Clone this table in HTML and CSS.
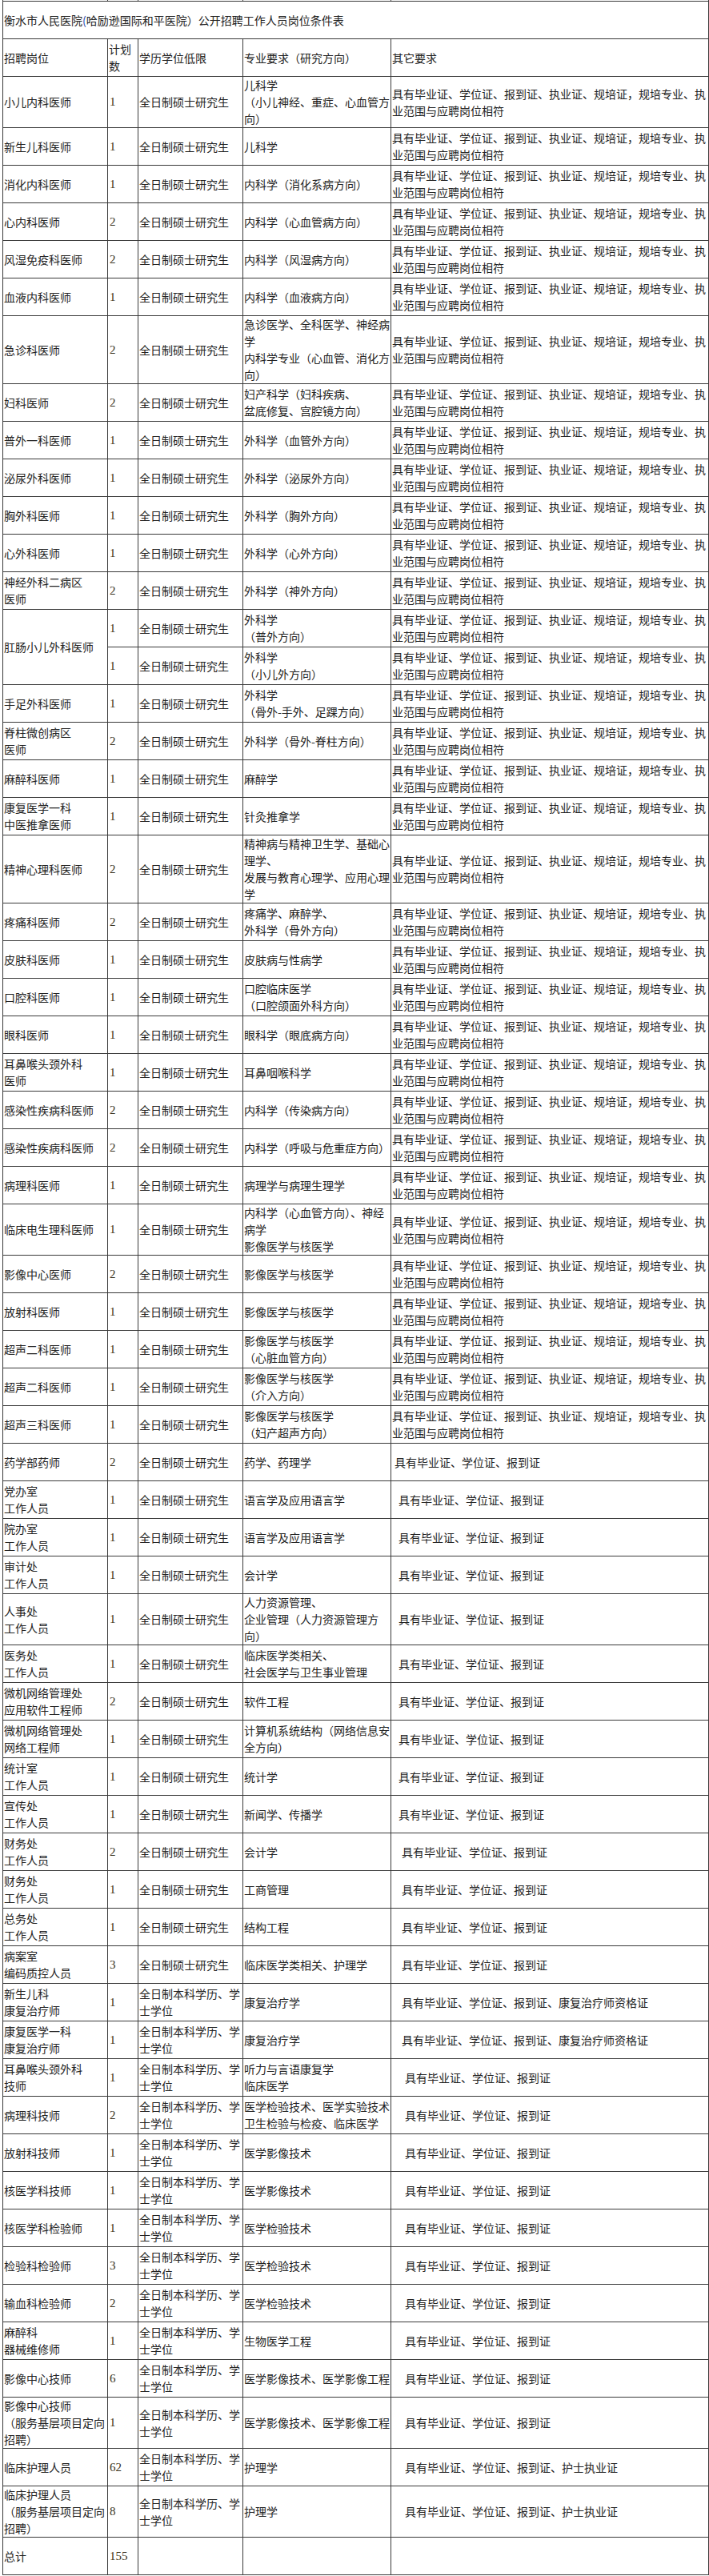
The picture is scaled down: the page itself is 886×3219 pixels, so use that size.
FILE: index.html
```html
<!DOCTYPE html>
<html lang="zh-CN">
<head>
<meta charset="utf-8">
<title>衡水市人民医院公开招聘工作人员岗位条件表</title>
<link rel="stylesheet" href="styles.css">
</head>
<body>
<table class="jobs">
<colgroup>
<col class="c1"><col class="c2"><col class="c3"><col class="c4"><col class="c5">
</colgroup>
<tbody>
<tr class="stub"><td></td><td></td><td></td><td></td><td></td></tr>
<tr><td colspan="5" class="title">衡水市人民医院<span class="paren">(</span>哈励逊国际和平医院）公开招聘工作人员岗位条件表</td></tr>
<tr><td>招聘岗位</td><td>计划数</td><td class="edu">学历学位低限</td><td>专业要求（研究方向）</td><td>其它要求</td></tr>

<tr><td>小儿内科医师</td><td class="num">1</td><td class="edu">全日制硕士研究生</td><td>儿科学<br>（小儿神经、重症、心血管方向）</td><td>具有毕业证、学位证、报到证、执业证、规培证，规培专业、执业范围与应聘岗位相符</td></tr>
<tr><td>新生儿科医师</td><td class="num">1</td><td class="edu">全日制硕士研究生</td><td>儿科学</td><td>具有毕业证、学位证、报到证、执业证、规培证，规培专业、执业范围与应聘岗位相符</td></tr>
<tr><td>消化内科医师</td><td class="num">1</td><td class="edu">全日制硕士研究生</td><td>内科学（消化系病方向）</td><td>具有毕业证、学位证、报到证、执业证、规培证，规培专业、执业范围与应聘岗位相符</td></tr>
<tr><td>心内科医师</td><td class="num">2</td><td class="edu">全日制硕士研究生</td><td>内科学（心血管病方向）</td><td>具有毕业证、学位证、报到证、执业证、规培证，规培专业、执业范围与应聘岗位相符</td></tr>
<tr><td>风湿免疫科医师</td><td class="num">2</td><td class="edu">全日制硕士研究生</td><td>内科学（风湿病方向）</td><td>具有毕业证、学位证、报到证、执业证、规培证，规培专业、执业范围与应聘岗位相符</td></tr>
<tr><td>血液内科医师</td><td class="num">1</td><td class="edu">全日制硕士研究生</td><td>内科学（血液病方向）</td><td>具有毕业证、学位证、报到证、执业证、规培证，规培专业、执业范围与应聘岗位相符</td></tr>
<tr><td>急诊科医师</td><td class="num">2</td><td class="edu">全日制硕士研究生</td><td>急诊医学、全科医学、神经病学<br>内科学专业（心血管、消化方向）</td><td>具有毕业证、学位证、报到证、执业证、规培证，规培专业、执业范围与应聘岗位相符</td></tr>
<tr><td>妇科医师</td><td class="num">2</td><td class="edu">全日制硕士研究生</td><td>妇产科学（妇科疾病、<br>盆底修复、宫腔镜方向）</td><td>具有毕业证、学位证、报到证、执业证、规培证，规培专业、执业范围与应聘岗位相符</td></tr>
<tr><td>普外一科医师</td><td class="num">1</td><td class="edu">全日制硕士研究生</td><td>外科学（血管外方向）</td><td>具有毕业证、学位证、报到证、执业证、规培证，规培专业、执业范围与应聘岗位相符</td></tr>
<tr><td>泌尿外科医师</td><td class="num">1</td><td class="edu">全日制硕士研究生</td><td>外科学（泌尿外方向）</td><td>具有毕业证、学位证、报到证、执业证、规培证，规培专业、执业范围与应聘岗位相符</td></tr>
<tr><td>胸外科医师</td><td class="num">1</td><td class="edu">全日制硕士研究生</td><td>外科学（胸外方向）</td><td>具有毕业证、学位证、报到证、执业证、规培证，规培专业、执业范围与应聘岗位相符</td></tr>
<tr><td>心外科医师</td><td class="num">1</td><td class="edu">全日制硕士研究生</td><td>外科学（心外方向）</td><td>具有毕业证、学位证、报到证、执业证、规培证，规培专业、执业范围与应聘岗位相符</td></tr>
<tr><td>神经外科二病区<br>医师</td><td class="num">2</td><td class="edu">全日制硕士研究生</td><td>外科学（神外方向）</td><td>具有毕业证、学位证、报到证、执业证、规培证，规培专业、执业范围与应聘岗位相符</td></tr>
<tr><td rowspan="2">肛肠小儿外科医师</td><td class="num">1</td><td class="edu">全日制硕士研究生</td><td>外科学<br>（普外方向）</td><td>具有毕业证、学位证、报到证、执业证、规培证，规培专业、执业范围与应聘岗位相符</td></tr>
<tr><td class="num">1</td><td class="edu">全日制硕士研究生</td><td>外科学<br>（小儿外方向）</td><td>具有毕业证、学位证、报到证、执业证、规培证，规培专业、执业范围与应聘岗位相符</td></tr>
<tr><td>手足外科医师</td><td class="num">1</td><td class="edu">全日制硕士研究生</td><td>外科学<br>（骨外-手外、足踝方向）</td><td>具有毕业证、学位证、报到证、执业证、规培证，规培专业、执业范围与应聘岗位相符</td></tr>
<tr><td>脊柱微创病区<br>医师</td><td class="num">2</td><td class="edu">全日制硕士研究生</td><td>外科学（骨外-脊柱方向）</td><td>具有毕业证、学位证、报到证、执业证、规培证，规培专业、执业范围与应聘岗位相符</td></tr>
<tr><td>麻醉科医师</td><td class="num">1</td><td class="edu">全日制硕士研究生</td><td>麻醉学</td><td>具有毕业证、学位证、报到证、执业证、规培证，规培专业、执业范围与应聘岗位相符</td></tr>
<tr><td>康复医学一科<br>中医推拿医师</td><td class="num">1</td><td class="edu">全日制硕士研究生</td><td>针灸推拿学</td><td>具有毕业证、学位证、报到证、执业证、规培证，规培专业、执业范围与应聘岗位相符</td></tr>
<tr><td>精神心理科医师</td><td class="num">2</td><td class="edu">全日制硕士研究生</td><td>精神病与精神卫生学、基础心理学、<br>发展与教育心理学、应用心理学</td><td>具有毕业证、学位证、报到证、执业证、规培证，规培专业、执业范围与应聘岗位相符</td></tr>
<tr><td>疼痛科医师</td><td class="num">2</td><td class="edu">全日制硕士研究生</td><td>疼痛学、麻醉学、<br>外科学（骨外方向）</td><td>具有毕业证、学位证、报到证、执业证、规培证，规培专业、执业范围与应聘岗位相符</td></tr>
<tr><td>皮肤科医师</td><td class="num">1</td><td class="edu">全日制硕士研究生</td><td>皮肤病与性病学</td><td>具有毕业证、学位证、报到证、执业证、规培证，规培专业、执业范围与应聘岗位相符</td></tr>
<tr><td>口腔科医师</td><td class="num">1</td><td class="edu">全日制硕士研究生</td><td>口腔临床医学<br>（口腔颌面外科方向）</td><td>具有毕业证、学位证、报到证、执业证、规培证，规培专业、执业范围与应聘岗位相符</td></tr>
<tr><td>眼科医师</td><td class="num">1</td><td class="edu">全日制硕士研究生</td><td>眼科学（眼底病方向）</td><td>具有毕业证、学位证、报到证、执业证、规培证，规培专业、执业范围与应聘岗位相符</td></tr>
<tr><td>耳鼻喉头颈外科<br>医师</td><td class="num">1</td><td class="edu">全日制硕士研究生</td><td>耳鼻咽喉科学</td><td>具有毕业证、学位证、报到证、执业证、规培证，规培专业、执业范围与应聘岗位相符</td></tr>
<tr><td>感染性疾病科医师</td><td class="num">2</td><td class="edu">全日制硕士研究生</td><td>内科学（传染病方向）</td><td>具有毕业证、学位证、报到证、执业证、规培证，规培专业、执业范围与应聘岗位相符</td></tr>
<tr><td>感染性疾病科医师</td><td class="num">2</td><td class="edu">全日制硕士研究生</td><td>内科学（呼吸与危重症方向）</td><td>具有毕业证、学位证、报到证、执业证、规培证，规培专业、执业范围与应聘岗位相符</td></tr>
<tr><td>病理科医师</td><td class="num">1</td><td class="edu">全日制硕士研究生</td><td>病理学与病理生理学</td><td>具有毕业证、学位证、报到证、执业证、规培证，规培专业、执业范围与应聘岗位相符</td></tr>
<tr><td>临床电生理科医师</td><td class="num">1</td><td class="edu">全日制硕士研究生</td><td>内科学（心血管方向）、神经病学<br>影像医学与核医学</td><td>具有毕业证、学位证、报到证、执业证、规培证，规培专业、执业范围与应聘岗位相符</td></tr>
<tr><td>影像中心医师</td><td class="num">2</td><td class="edu">全日制硕士研究生</td><td>影像医学与核医学</td><td>具有毕业证、学位证、报到证、执业证、规培证，规培专业、执业范围与应聘岗位相符</td></tr>
<tr><td>放射科医师</td><td class="num">1</td><td class="edu">全日制硕士研究生</td><td>影像医学与核医学</td><td>具有毕业证、学位证、报到证、执业证、规培证，规培专业、执业范围与应聘岗位相符</td></tr>
<tr><td>超声二科医师</td><td class="num">1</td><td class="edu">全日制硕士研究生</td><td>影像医学与核医学<br>（心脏血管方向）</td><td>具有毕业证、学位证、报到证、执业证、规培证，规培专业、执业范围与应聘岗位相符</td></tr>
<tr><td>超声二科医师</td><td class="num">1</td><td class="edu">全日制硕士研究生</td><td>影像医学与核医学<br>（介入方向）</td><td>具有毕业证、学位证、报到证、执业证、规培证，规培专业、执业范围与应聘岗位相符</td></tr>
<tr><td>超声三科医师</td><td class="num">1</td><td class="edu">全日制硕士研究生</td><td>影像医学与核医学<br>（妇产超声方向）</td><td>具有毕业证、学位证、报到证、执业证、规培证，规培专业、执业范围与应聘岗位相符</td></tr>
<tr><td>药学部药师</td><td class="num">2</td><td class="edu">全日制硕士研究生</td><td>药学、药理学</td><td class="in0">具有毕业证、学位证、报到证</td></tr>
<tr><td>党办室<br>工作人员</td><td class="num">1</td><td class="edu">全日制硕士研究生</td><td>语言学及应用语言学</td><td class="in1">具有毕业证、学位证、报到证</td></tr>
<tr><td>院办室<br>工作人员</td><td class="num">1</td><td class="edu">全日制硕士研究生</td><td>语言学及应用语言学</td><td class="in1">具有毕业证、学位证、报到证</td></tr>
<tr><td>审计处<br>工作人员</td><td class="num">1</td><td class="edu">全日制硕士研究生</td><td>会计学</td><td class="in1">具有毕业证、学位证、报到证</td></tr>
<tr><td>人事处<br>工作人员</td><td class="num">1</td><td class="edu">全日制硕士研究生</td><td>人力资源管理、<br>企业管理（人力资源管理方向）</td><td class="in1">具有毕业证、学位证、报到证</td></tr>
<tr><td>医务处<br>工作人员</td><td class="num">1</td><td class="edu">全日制硕士研究生</td><td>临床医学类相关、<br>社会医学与卫生事业管理</td><td class="in1">具有毕业证、学位证、报到证</td></tr>
<tr><td>微机网络管理处<br>应用软件工程师</td><td class="num">2</td><td class="edu">全日制硕士研究生</td><td>软件工程</td><td class="in1">具有毕业证、学位证、报到证</td></tr>
<tr><td>微机网络管理处<br>网络工程师</td><td class="num">1</td><td class="edu">全日制硕士研究生</td><td>计算机系统结构（网络信息安全方向）</td><td class="in1">具有毕业证、学位证、报到证</td></tr>
<tr><td>统计室<br>工作人员</td><td class="num">1</td><td class="edu">全日制硕士研究生</td><td>统计学</td><td class="in1">具有毕业证、学位证、报到证</td></tr>
<tr><td>宣传处<br>工作人员</td><td class="num">1</td><td class="edu">全日制硕士研究生</td><td>新闻学、传播学</td><td class="in1">具有毕业证、学位证、报到证</td></tr>
<tr><td>财务处<br>工作人员</td><td class="num">2</td><td class="edu">全日制硕士研究生</td><td>会计学</td><td class="in2">具有毕业证、学位证、报到证</td></tr>
<tr><td>财务处<br>工作人员</td><td class="num">1</td><td class="edu">全日制硕士研究生</td><td>工商管理</td><td class="in2">具有毕业证、学位证、报到证</td></tr>
<tr><td>总务处<br>工作人员</td><td class="num">1</td><td class="edu">全日制硕士研究生</td><td>结构工程</td><td class="in2">具有毕业证、学位证、报到证</td></tr>
<tr><td>病案室<br>编码质控人员</td><td class="num">3</td><td class="edu">全日制硕士研究生</td><td>临床医学类相关、护理学</td><td class="in2">具有毕业证、学位证、报到证</td></tr>
<tr><td>新生儿科<br>康复治疗师</td><td class="num">1</td><td class="edu">全日制本科学历、学士学位</td><td>康复治疗学</td><td class="in2">具有毕业证、学位证、报到证、康复治疗师资格证</td></tr>
<tr><td>康复医学一科<br>康复治疗师</td><td class="num">1</td><td class="edu">全日制本科学历、学士学位</td><td>康复治疗学</td><td class="in2">具有毕业证、学位证、报到证、康复治疗师资格证</td></tr>
<tr><td>耳鼻喉头颈外科<br>技师</td><td class="num">1</td><td class="edu">全日制本科学历、学士学位</td><td>听力与言语康复学<br>临床医学</td><td class="in3">具有毕业证、学位证、报到证</td></tr>
<tr><td>病理科技师</td><td class="num">2</td><td class="edu">全日制本科学历、学士学位</td><td>医学检验技术、医学实验技术<br>卫生检验与检疫、临床医学</td><td class="in3">具有毕业证、学位证、报到证</td></tr>
<tr><td>放射科技师</td><td class="num">1</td><td class="edu">全日制本科学历、学士学位</td><td>医学影像技术</td><td class="in3">具有毕业证、学位证、报到证</td></tr>
<tr><td>核医学科技师</td><td class="num">1</td><td class="edu">全日制本科学历、学士学位</td><td>医学影像技术</td><td class="in3">具有毕业证、学位证、报到证</td></tr>
<tr><td>核医学科检验师</td><td class="num">1</td><td class="edu">全日制本科学历、学士学位</td><td>医学检验技术</td><td class="in3">具有毕业证、学位证、报到证</td></tr>
<tr><td>检验科检验师</td><td class="num">3</td><td class="edu">全日制本科学历、学士学位</td><td>医学检验技术</td><td class="in3">具有毕业证、学位证、报到证</td></tr>
<tr><td>输血科检验师</td><td class="num">2</td><td class="edu">全日制本科学历、学士学位</td><td>医学检验技术</td><td class="in3">具有毕业证、学位证、报到证</td></tr>
<tr><td>麻醉科<br>器械维修师</td><td class="num">1</td><td class="edu">全日制本科学历、学士学位</td><td>生物医学工程</td><td class="in3">具有毕业证、学位证、报到证</td></tr>
<tr><td>影像中心技师</td><td class="num">6</td><td class="edu">全日制本科学历、学士学位</td><td>医学影像技术、医学影像工程</td><td class="in3">具有毕业证、学位证、报到证</td></tr>
<tr><td>影像中心技师<br>（服务基层项目定向招聘）</td><td class="num">1</td><td class="edu">全日制本科学历、学士学位</td><td>医学影像技术、医学影像工程</td><td class="in3">具有毕业证、学位证、报到证</td></tr>
<tr><td>临床护理人员</td><td class="num">62</td><td class="edu">全日制本科学历、学士学位</td><td>护理学</td><td class="in3">具有毕业证、学位证、报到证、护士执业证</td></tr>
<tr><td>临床护理人员<br>（服务基层项目定向招聘）</td><td class="num">8</td><td class="edu">全日制本科学历、学士学位</td><td>护理学</td><td class="in3">具有毕业证、学位证、报到证、护士执业证</td></tr>
<tr><td>总计</td><td class="num">155</td><td class="edu"></td><td></td><td></td></tr>
</tbody>
</table>
</body>
</html>
```

FILE: styles.css
```css
html, body {
  margin: 0;
  padding: 0;
  background: #ffffff;
}

body {
  font-family: "Noto Sans CJK SC", "Liberation Sans", sans-serif;
  font-size: 14px;
  color: #222222;
}

.jobs {
  border-collapse: collapse;
  table-layout: fixed;
  width: 882px;
  margin-left: 3px;
}

.jobs .c1 { width: 131px; }
.jobs .c2 { width: 38px; }
.jobs .c3 { width: 131px; }
.jobs .c4 { width: 185px; }
.jobs .c5 { width: 397px; }

.jobs td {
  border: 1px solid #3a3a3a;
  padding: 0 0 0 1px;
  line-height: 21px;
  height: 46px;
  vertical-align: middle;
  text-align: left;
  word-break: normal;
}

.jobs td.edu {
  border-left-color: #a0a0a0;
}

.jobs .stub td {
  height: 1px;
  padding: 0;
  line-height: 0;
  font-size: 0;
  border-top: 0;
}

.jobs td.num {
  font-family: "Liberation Serif", serif;
  font-size: 15px;
  color: #3b3320;
  padding-left: 2px;
}

.title .paren {
  color: #2a4fb0;
}

.jobs td.in0 { padding-left: 4px; }
.jobs td.in1 { padding-left: 9px; }
.jobs td.in2 { padding-left: 13px; }
.jobs td.in3 { padding-left: 17px; }
```
